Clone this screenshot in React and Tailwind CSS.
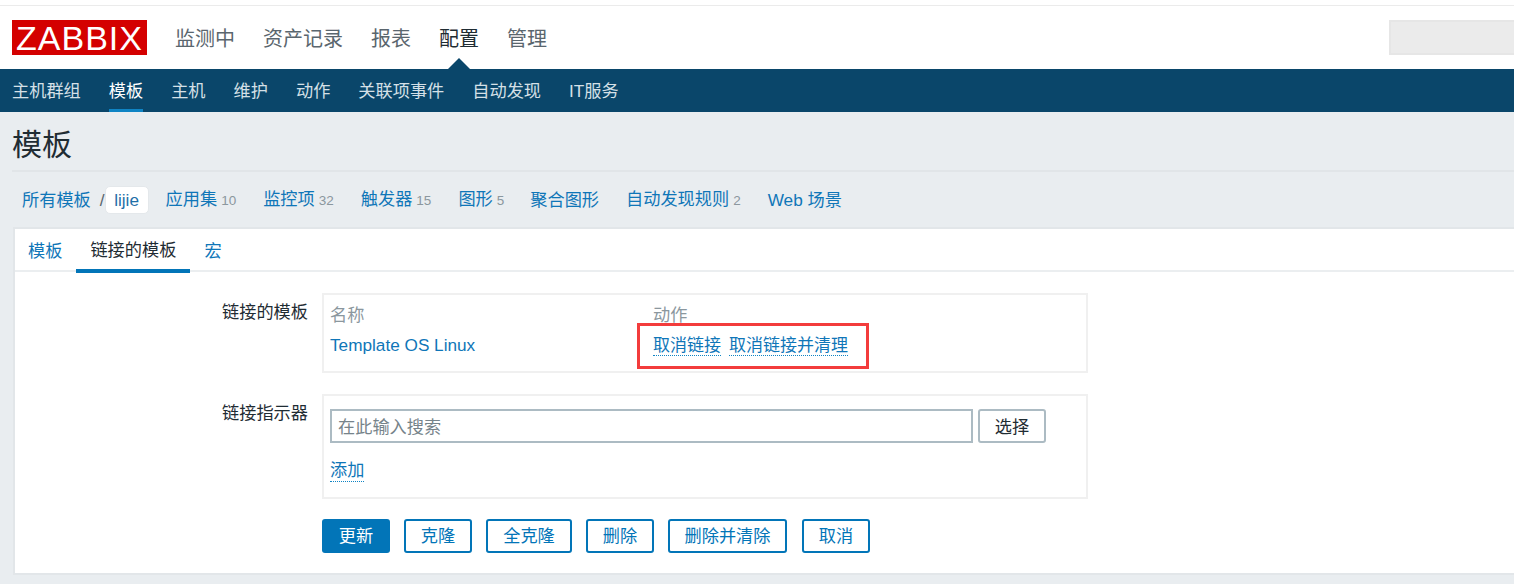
import React from 'react';

const mainNav = ['监测中', '资产记录', '报表', '配置', '管理'];
const subNav = ['主机群组', '模板', '主机', '维护', '动作', '关联项事件', '自动发现', 'IT服务'];
const crumbs = [
  { label: '应用集', count: 10, cls: 'ml-[17px] pb-[2px]' },
  { label: '监控项', count: 32, cls: 'ml-[27px] pb-[2px]' },
  { label: '触发器', count: 15, cls: 'ml-[27px] pb-[2px]' },
  { label: '图形', count: 5, cls: 'ml-[27px] pb-[2px]' },
  { label: '聚合图形', cls: 'ml-[26px]' },
  { label: '自动发现规则', count: 2, cls: 'ml-[27px] pb-[2px]' },
  { label: 'Web 场景', cls: 'ml-[27px]' },
];
const buttons = [
  { label: '克隆', cls: 'w-[68px]' },
  { label: '全克隆', cls: 'w-[86px]' },
  { label: '删除', cls: 'w-[68px]' },
  { label: '删除并清除', cls: 'w-[119px]' },
  { label: '取消', cls: 'w-[68px] ml-[1px]' },
];

export default function App() {
  return (
    <div className="h-[584px] w-[1514px] overflow-hidden bg-[#e9edf0] text-[17.2px] text-[#1f2c33] font-['Liberation_Sans','Noto_Sans_CJK_SC',sans-serif]">
      {/* TOP HEADER */}
      <header className="relative h-[69px] bg-white pt-[5px]">
        <div className="h-[15px] border-t border-[#ebebeb]" />
        <div className="flex h-[35px] items-center pl-3">
          <div className="flex h-[35px] w-[135px] items-center justify-center bg-[#d40000] text-[34px] leading-none tracking-[1px] text-white">
            ZABBIX
          </div>
          <nav className="ml-[28px] flex gap-[28px] pt-[2px] text-[20px]">
            {mainNav.map((item) => (
              <a key={item} className={item === '配置' ? 'text-[#1f2c33]' : 'text-[#5a666e]'}>{item}</a>
            ))}
          </nav>
          <div className="ml-auto h-[35px] w-[125px] border-2 border-r-0 border-[#e6e6e6] bg-[#ebebeb]" />
        </div>
        <div className="absolute bottom-0 left-[448px] h-0 w-0 border-x-[11px] border-b-[11px] border-x-transparent border-b-[#0a466a]" />
      </header>

      {/* SUB NAV */}
      <nav className="flex h-[43px] gap-[28px] bg-[#0a466a] pl-3">
        {subNav.map((item) => (
          <a
            key={item}
            className={item === '模板'
              ? 'flex h-[43px] items-center border-b-[3px] border-[#0f84c4] pt-[5px] text-white'
              : 'flex h-[43px] items-center pt-[2px] text-[#d5e0e7]'}
          >
            {item}
          </a>
        ))}
      </nav>

      <main className="pl-3">
        <h1 className="flex h-[60px] items-center border-b-2 border-[#e1e5e8] pt-[6px] text-[30px] font-normal text-[#1f2c33]">模板</h1>

        {/* BREADCRUMB */}
        <div className="flex h-[55px] items-center pl-[10px] pt-[1px] text-[#0f76b8]">
          <a className="pt-[2px]">所有模板</a>
          <span className="ml-[9px] pt-[1px] text-[#5a666e]">/</span>
          <span className="flex h-[28px] w-[44px] items-center justify-center rounded-[5px] border border-[#e4e8eb] bg-white pt-[1px] text-[#1f6fa8]">lijie</span>
          {crumbs.map((c) => (
            <span key={c.label} className={`flex items-baseline gap-[4px] pt-[2px] ${c.cls}`}>
              <a>{c.label}</a>
              {c.count !== undefined && <span className="text-[13.5px] text-[#8b979e]">{c.count}</span>}
            </span>
          ))}
        </div>

        {/* CARD */}
        <section className="ml-[1px] h-[348px] border-2 border-r-0 border-[#e2e6e9] bg-white">
          <div className="flex h-[43px] border-b-2 border-[#ebeef0] pl-[13px] text-[#0f76b8]">
            <a className="flex h-[43px] items-center pt-[2px]">模板</a>
            <a className="ml-[14px] flex h-[44px] w-[114px] items-center justify-center border-b-[4px] border-[#0275b8] pt-[4px] text-[#1f2c33]">链接的模板</a>
            <a className="ml-[14px] flex h-[43px] items-center pt-[2px]">宏</a>
          </div>

          <div className="flex pt-[21px]">
            <div className="w-[293px] pt-[7px] text-right leading-[24px]">链接的模板</div>
            <div className="relative ml-[14px] h-[80px] w-[766px] border-2 border-[#f0f0f0] pl-[6px] pt-[8px]">
              <div className="flex text-[#8b979e] leading-[24px]">
                <span className="w-[323px]">名称</span>
                <span>动作</span>
              </div>
              <div className="mt-[8px] flex leading-[20px]">
                <a className="w-[323px] text-[#0f76b8]">Template OS Linux</a>
                <a className="border-b border-dotted border-[#0f84c4] pt-[2px] text-[17px] leading-[18px] text-[#0f76b8]">取消链接</a>
                <a className="ml-[8px] border-b border-dotted border-[#0f84c4] pt-[2px] text-[17px] leading-[18px] text-[#0f76b8]">取消链接并清理</a>
              </div>
              {/* red annotation */}
              <div className="absolute left-[313px] top-[28px] h-[46px] w-[232px] border-[3px] border-[#f33c3c]" />
            </div>
          </div>

          <div className="flex pt-[21px]">
            <div className="w-[293px] pt-[7px] text-right leading-[24px]">链接指示器</div>
            <div className="ml-[14px] h-[105px] w-[766px] border-2 border-[#f0f0f0] pl-[6px] pt-[13px]">
              <div className="flex gap-[5px]">
                <div className="flex h-[34px] w-[643px] items-center border-2 border-[#acbbc3] pl-[6px] pt-[3px] text-[#76838a]">在此输入搜索</div>
                <button className="h-[34px] w-[68px] rounded-[3px] border-2 border-[#acbbc3] pt-[3px] text-[#1f2c33]">选择</button>
              </div>
              <a className="mt-[16px] inline-block border-b border-dotted border-[#0f84c4] leading-[22px] text-[#0f76b8]">添加</a>
            </div>
          </div>

          <div className="flex gap-[14px] pl-[307px] pt-[20px]">
            <button className="h-[34px] w-[68px] rounded-[3px] bg-[#0275b8] pt-[2px] text-white">更新</button>
            {buttons.map((b) => (
              <button key={b.label} className={`h-[34px] rounded-[3px] border-2 border-[#0275b8] pt-[2px] text-[#0275b8] ${b.cls}`}>{b.label}</button>
            ))}
          </div>
        </section>
      </main>
    </div>
  );
}
